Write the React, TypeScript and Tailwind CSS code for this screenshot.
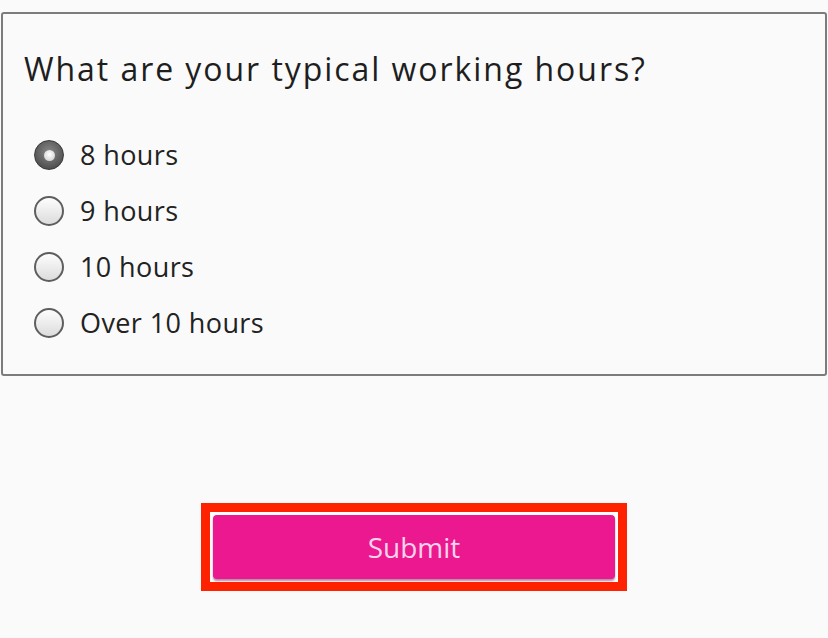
import { useState } from "react";

const options = ["8 hours", "9 hours", "10 hours", "Over 10 hours"];

function Radio({ checked }: { checked: boolean }) {
  if (checked) {
    return (
      <span className="flex h-[30px] w-[30px] shrink-0 items-center justify-center rounded-full border border-[#3a3a3a] bg-[radial-gradient(circle_at_50%_40%,#8a8a8a,#3c3c3c)]">
        <span className="h-[11px] w-[11px] rounded-full bg-[radial-gradient(circle_at_50%_40%,#ffffff,#c8c8c8)]" />
      </span>
    );
  }
  return (
    <span className="h-[30px] w-[30px] shrink-0 rounded-full border-2 border-[#5e5e5e] bg-[linear-gradient(180deg,#fdfdfd,#dcdcdc)]" />
  );
}

export default function App() {
  const [selected, setSelected] = useState(0);

  return (
    <div className="min-h-[638px] w-full bg-[#fafafa] pt-[12px] font-['Open_Sans',sans-serif]">
      <div className="mx-[1px] rounded-[3px] border-2 border-[#7c7c7c] bg-[#fafafa] pl-[21px] pt-[33px] pb-[30px]">
        <h1 className="text-[32px] font-medium leading-[44px] tracking-[1.95px] text-[#1e1e1e]">
          What are your typical working hours?
        </h1>
        <div className="mt-[43px] flex flex-col gap-[14px] pl-[10px]">
          {options.map((opt, i) => (
            <button
              key={opt}
              onClick={() => setSelected(i)}
              className="flex h-[42px] items-center gap-[16px] text-left"
            >
              <Radio checked={selected === i} />
              <span className="text-[27px] tracking-[0.4px] text-[#222]">{opt}</span>
            </button>
          ))}
        </div>
      </div>

      <div className="mt-[127px] flex justify-center">
        <div className="border-[9px] border-[#ff2200] bg-white p-[3px]">
          <button className="flex h-[64px] w-[402px] items-center justify-center rounded-[4px] bg-[#ec1890] text-[28px] text-[#fcd3ea] shadow-[0_2px_2px_rgba(120,20,80,0.5)]">
            Submit
          </button>
        </div>
      </div>
    </div>
  );
}
